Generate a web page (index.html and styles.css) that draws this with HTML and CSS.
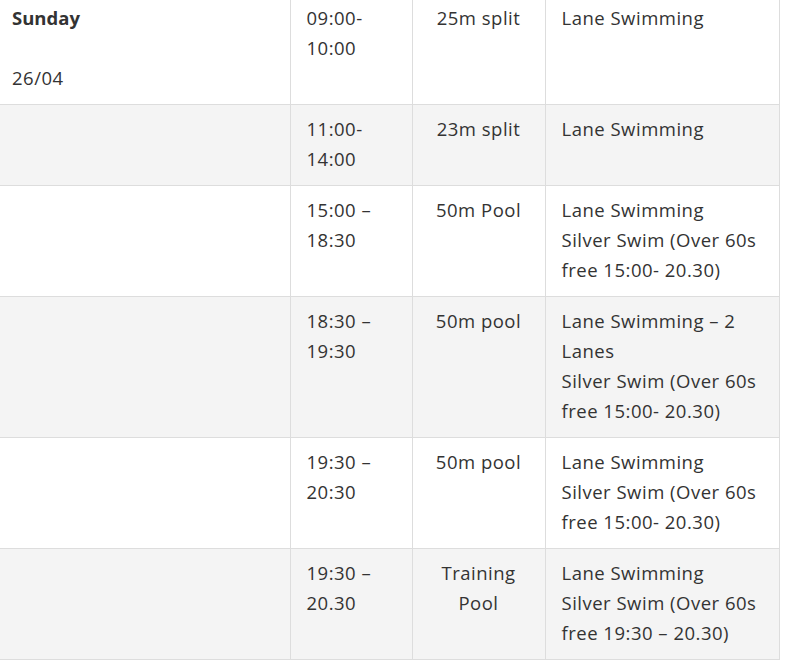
FILE: index.html
```html
<!DOCTYPE html>
<html>
<head>
<meta charset="utf-8">
<link rel="stylesheet" href="styles.css">
</head>
<body>
<table class="timetable">
  <colgroup>
    <col class="c-day">
    <col class="c-time">
    <col class="c-pool">
    <col class="c-act">
  </colgroup>
  <tbody>
    <tr>
      <td class="day"><strong>Sunday</strong><br><br>26/04</td>
      <td>09:00-<br>10:00</td>
      <td class="pool">25m split</td>
      <td>Lane Swimming</td>
    </tr>
    <tr class="alt">
      <td class="day"></td>
      <td>11:00-<br>14:00</td>
      <td class="pool">23m split</td>
      <td>Lane Swimming</td>
    </tr>
    <tr>
      <td class="day"></td>
      <td>15:00 –<br>18:30</td>
      <td class="pool">50m Pool</td>
      <td>Lane Swimming<br>Silver Swim (Over 60s free 15:00- 20.30)</td>
    </tr>
    <tr class="alt">
      <td class="day"></td>
      <td>18:30 –<br>19:30</td>
      <td class="pool">50m pool</td>
      <td>Lane Swimming – 2 Lanes<br>Silver Swim (Over 60s free 15:00- 20.30)</td>
    </tr>
    <tr>
      <td class="day"></td>
      <td>19:30 –<br>20:30</td>
      <td class="pool">50m pool</td>
      <td>Lane Swimming<br>Silver Swim (Over 60s free 15:00- 20.30)</td>
    </tr>
    <tr class="alt">
      <td class="day"></td>
      <td>19:30 –<br>20.30</td>
      <td class="pool">Training Pool</td>
      <td>Lane Swimming<br>Silver Swim (Over 60s free 19:30 – 20.30)</td>
    </tr>
  </tbody>
</table>
</body>
</html>
```

FILE: styles.css
```css
html, body {
  margin: 0;
  padding: 0;
  background: #ffffff;
}

body {
  font-family: "Open Sans", "Liberation Sans", sans-serif;
  font-size: 18.5px;
  letter-spacing: 0.5px;
  line-height: 30px;
  color: #333333;
}

.timetable {
  border-collapse: collapse;
  table-layout: fixed;
  width: 779px;
  margin-top: -7px;
}

.c-day { width: 290px; }
.c-time { width: 122px; }
.c-pool { width: 133px; }
.c-act { width: 234px; }

.timetable td {
  vertical-align: top;
  padding: 9px 16px 11px;
  border: 1px solid #dddddd;
}

.timetable td.day {
  padding-left: 12px;
  border-left: none;
}

.timetable td.pool {
  text-align: center;
}

.timetable tr.alt td {
  background: #f4f4f4;
}

.timetable strong {
  font-weight: 700;
  letter-spacing: 0;
}
```
